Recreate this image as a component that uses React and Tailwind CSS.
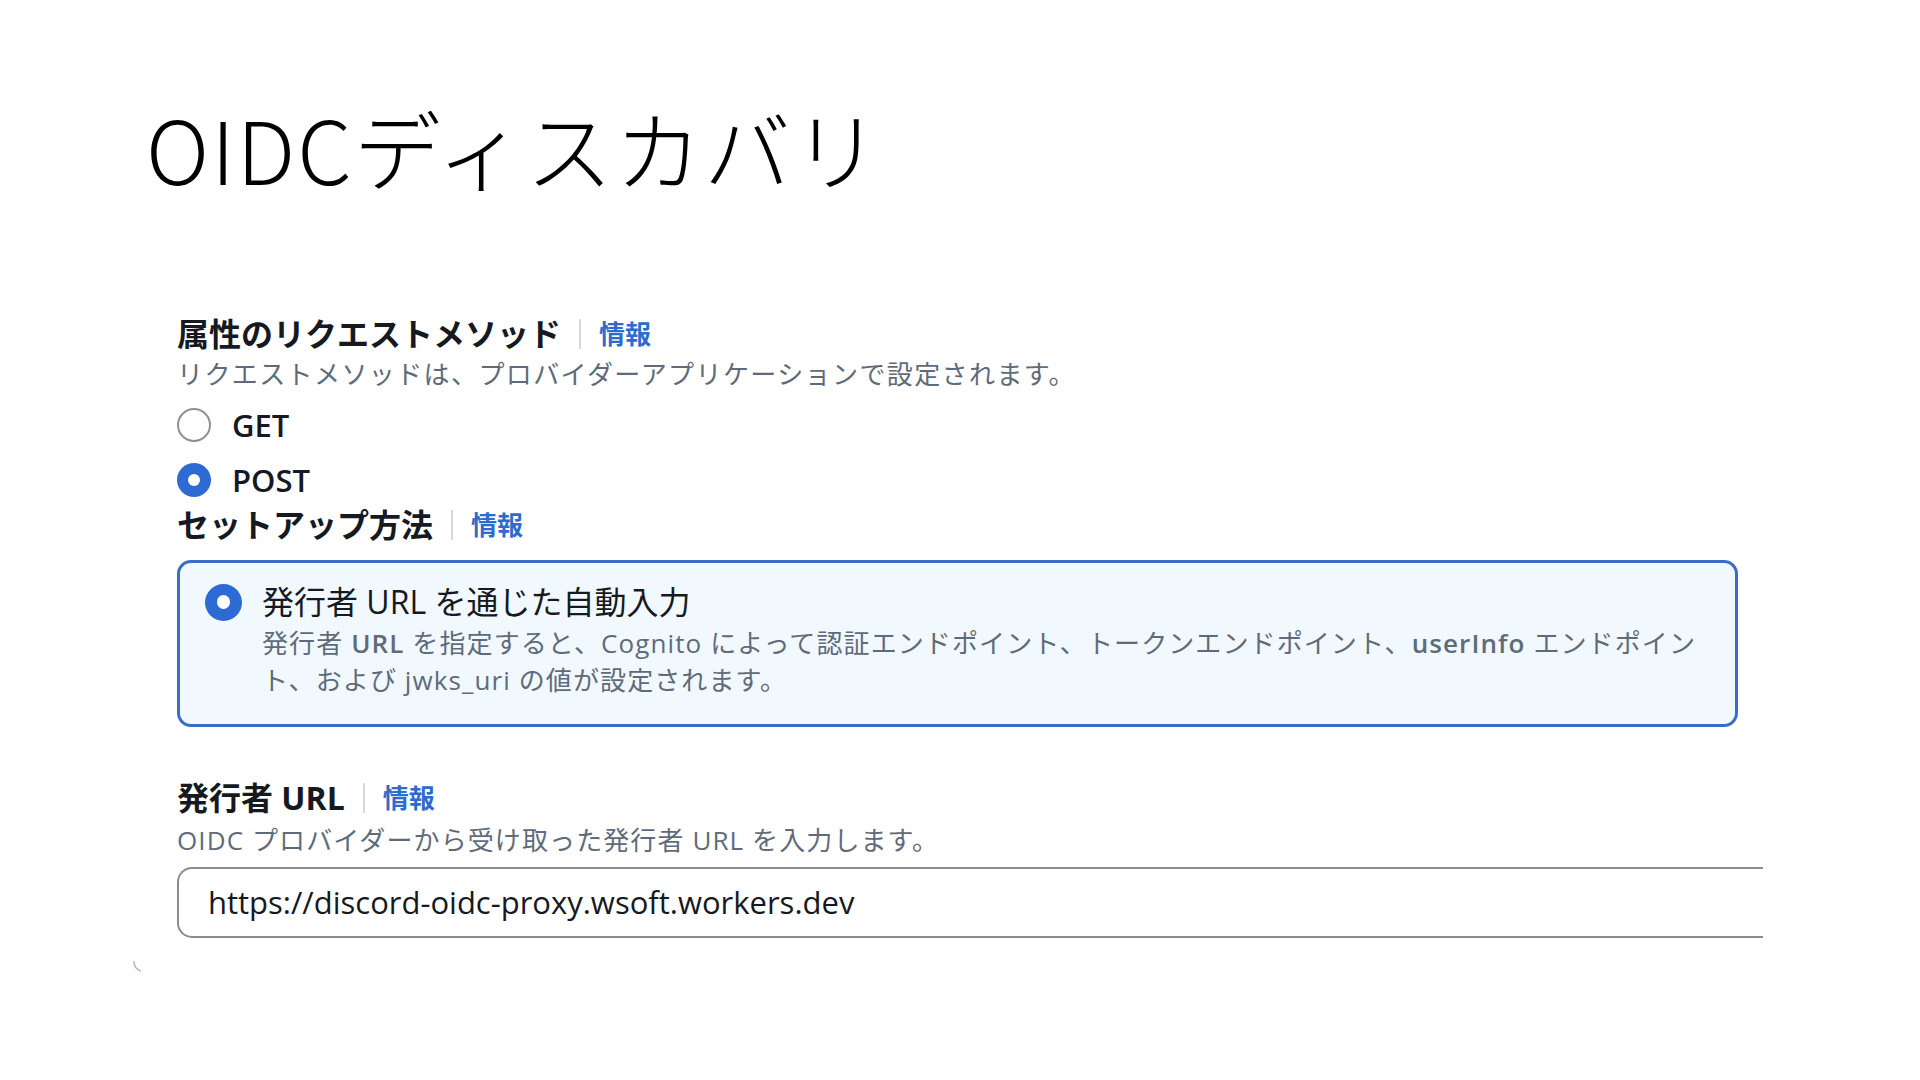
const jp = { fontFamily: '"Open Sans", "Noto Sans CJK JP", sans-serif' }

function Label({ children, className = '' }) {
  return (
    <div className={`flex items-center h-[40px] ${className}`}>
      <span className="text-[32px] font-bold text-[#16191f] leading-[40px]">{children}</span>
      <span className="mx-[18px] w-[2px] h-[30px] bg-[#d5d8dc]" />
      <span className="text-[26px] font-semibold text-[#2d6bd0] leading-[40px]">情報</span>
    </div>
  )
}

function Radio({ checked, size = 34 }) {
  if (checked) {
    return (
      <span
        className="shrink-0 rounded-full bg-[#2d6ad4] flex items-center justify-center"
        style={{ width: size, height: size }}
      >
        <span className="rounded-full bg-white" style={{ width: size * 0.36, height: size * 0.36 }} />
      </span>
    )
  }
  return (
    <span
      className="shrink-0 rounded-full border-2 border-[#8d9096] bg-white"
      style={{ width: size, height: size }}
    />
  )
}

export default function App() {
  return (
    <div className="w-[1920px] h-[1080px] bg-white overflow-hidden" style={jp}>
      <div className="pt-[99px] pl-[146px]">
        <h1
          className="text-[87px] leading-[96px] font-light tracking-[2px] text-black"
          style={{ fontFamily: '"Noto Sans CJK JP", sans-serif' }}
        >
          OIDCディスカバリ
        </h1>
      </div>

      <div className="pl-[177px] flex flex-col">
        <Label className="mt-[119px]">属性のリクエストメソッド</Label>
        <p className="mt-[2px] text-[26px] leading-[36px] tracking-[1.4px] text-[#5f6b7a]">
          リクエストメソッドは、プロバイダーアプリケーションで設定されます。
        </p>

        <div className="mt-[15px] flex items-center h-[36px]">
          <Radio />
          <span className="ml-[21px] text-[31px] font-semibold text-[#16191f]">GET</span>
        </div>
        <div className="mt-[19px] flex items-center h-[36px]">
          <Radio checked />
          <span className="ml-[21px] text-[31px] font-semibold text-[#16191f]">POST</span>
        </div>

        <Label className="mt-[7px]">セットアップ方法</Label>

        <div className="mt-[15px] w-[1561px] h-[167px] border-[3px] border-[#3a6dc8] rounded-[14px] bg-[#f1f9ff] pl-[25px] pt-[19px] flex">
          <div className="h-[40px] flex items-center">
            <Radio checked size={37} />
          </div>
          <div className="ml-[20px]">
            <div className="text-[32px] leading-[40px] text-[#16191f]">発行者 URL を通じた自動入力</div>
            <div className="mt-[3px] text-[26px] leading-[37px] tracking-[1.1px] text-[#5f6b7a]">
              発行者 <span className="font-semibold">URL</span> を指定すると、<span className="font-medium">Cognito</span> によって認証エンドポイント、トークンエンドポイント、<span className="font-semibold">userInfo</span> エンドポイン
              <br />
              ト、および jwks_uri の値が設定されます。
            </div>
          </div>
        </div>

        <Label className="mt-[51px]">発行者 URL</Label>
        <p className="mt-[4px] text-[26px] leading-[36px] tracking-[1.1px] text-[#5f6b7a]">
          OIDC プロバイダーから受け取った発行者 URL を入力します。
        </p>

        <div className="mt-[9px] w-[1586px] h-[71px] border-2 border-r-0 border-[#8c8c8c] rounded-l-[15px] pl-[29px] flex items-center">
          <span className="text-[31px] text-[#16191f]">https://discord-oidc-proxy.wsoft.workers.dev</span>
        </div>

        <svg className="mt-[22px] ml-[-45px]" width="12" height="12" viewBox="0 0 12 12">
          <path d="M2 1 Q2 9 9 11" fill="none" stroke="#b5b8bc" strokeWidth="1.5" />
        </svg>
      </div>
    </div>
  )
}
